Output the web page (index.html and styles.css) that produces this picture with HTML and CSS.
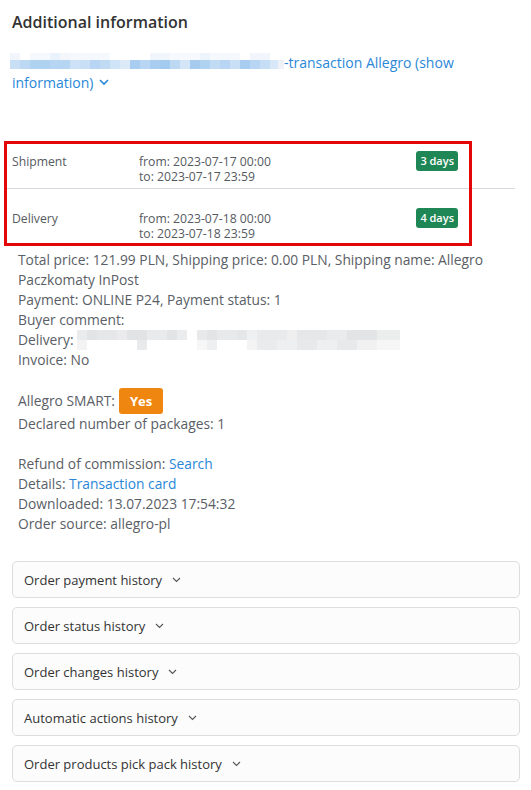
FILE: index.html
```html
<!DOCTYPE html>
<html lang="en">

<head>
    <meta charset="UTF-8">
    <meta name="viewport" content="width=device-width, initial-scale=1.0">
    <title>Additional information</title>
    <link rel="stylesheet" href="styles.css">
</head>

<body>

    <div class="panel">
        <h2 class="panel-title">Additional information</h2>

        <p class="transaction">
            <span class="blur-link"></span><a href="#" class="link">-transaction Allegro (show information)
                <svg class="link-chevron" width="10" height="7" viewBox="0 0 10 7"><polyline points="1,1 5,5 9,1" fill="none" stroke="currentColor" stroke-width="1.6"/></svg></a>
        </p>

        <div class="schedule">
            <div class="schedule-row">
                <div class="schedule-label">Shipment</div>
                <div class="schedule-dates">
                    <div class="date-line">from: 2023-07-17 00:00</div>
                    <div class="date-line">to: 2023-07-17 23:59</div>
                </div>
                <span class="badge-days">3 days</span>
            </div>
            <div class="schedule-row">
                <div class="schedule-label">Delivery</div>
                <div class="schedule-dates">
                    <div class="date-line">from: 2023-07-18 00:00</div>
                    <div class="date-line">to: 2023-07-18 23:59</div>
                </div>
                <span class="badge-days">4 days</span>
            </div>
            <div class="highlight"></div>
        </div>

        <div class="info">
            <div>Total price: 121.99 PLN, Shipping price: 0.00 PLN, Shipping name: Allegro Paczkomaty InPost</div>
            <div>Payment: ONLINE P24, Payment status: 1</div>
            <div>Buyer comment:</div>
            <div>Delivery: <span class="blur-address"></span></div>
            <div>Invoice: No</div>

            <div class="smart-row">Allegro SMART: <span class="badge-yes">Yes</span></div>
            <div>Declared number of packages: 1</div>

            <div class="gap-top">Refund of commission: <a href="#" class="link">Search</a></div>
            <div>Details: <a href="#" class="link">Transaction card</a></div>
            <div>Downloaded: 13.07.2023 17:54:32</div>
            <div>Order source: allegro-pl</div>
        </div>

        <div class="history">
            <div class="history-item">Order payment history
                <svg class="chevron" width="9" height="6" viewBox="0 0 9 6"><polyline points="1,1 4.5,4.5 8,1" fill="none" stroke="currentColor" stroke-width="1.1"/></svg>
            </div>
            <div class="history-item">Order status history
                <svg class="chevron" width="9" height="6" viewBox="0 0 9 6"><polyline points="1,1 4.5,4.5 8,1" fill="none" stroke="currentColor" stroke-width="1.1"/></svg>
            </div>
            <div class="history-item">Order changes history
                <svg class="chevron" width="9" height="6" viewBox="0 0 9 6"><polyline points="1,1 4.5,4.5 8,1" fill="none" stroke="currentColor" stroke-width="1.1"/></svg>
            </div>
            <div class="history-item">Automatic actions history
                <svg class="chevron" width="9" height="6" viewBox="0 0 9 6"><polyline points="1,1 4.5,4.5 8,1" fill="none" stroke="currentColor" stroke-width="1.1"/></svg>
            </div>
            <div class="history-item">Order products pick pack history
                <svg class="chevron" width="9" height="6" viewBox="0 0 9 6"><polyline points="1,1 4.5,4.5 8,1" fill="none" stroke="currentColor" stroke-width="1.1"/></svg>
            </div>
        </div>
    </div>

</body>

</html>
```

FILE: styles.css
```css
body {
    margin: 0;
    padding: 0;
    background-color: #fff;
    font-family: "Open Sans", "Liberation Sans", sans-serif;
    color: #5a5e66;
}

.panel {
    padding-top: 10px;
}

.panel-title {
    margin: 0 0 19px 12px;
    font-size: 16px;
    line-height: 24px;
    font-weight: 600;
    color: #333;
}

.transaction {
    margin: 0 30px 39px 12px;
    font-size: 14px;
    line-height: 20px;
}

.link {
    color: #2a87d8;
    text-decoration: none;
}

.link-chevron {
    margin-left: 2px;
    vertical-align: 2px;
}

.blur-link {
    display: inline-block;
    vertical-align: top;
    width: 274px;
    height: 16px;
    margin-left: -2px;
    background:
        linear-gradient(to right,
            #f2f6fc 0 10px, #fff 10px 20px, #f5f9fd 20px 40px, #eaf2fb 40px 50px, #f3f7fc 50px 60px,
            #f5f9fd 60px 100px, #fff 100px 140px, #f1f6fc 140px 160px, #f6f9fd 160px 190px,
            #eef4fb 190px 200px, #f5f9fd 200px 230px, #fff 230px 240px, #f2f6fc 240px 260px, #fff 260px 274px) top / 100% 7px no-repeat,
        linear-gradient(to right,
            #c9dff5 0 10px, #bcd8f3 10px 20px, #b0d2f1 20px 40px, #b5d5f2 40px 60px, #cde2f6 60px 70px,
            #c8dff5 70px 80px, #b8d6f3 80px 90px, #c0daf4 90px 100px, #d0e4f7 100px 110px, #dceaf8 110px 120px,
            #a9cdf0 120px 130px, #b8d6f3 130px 140px, #a9cdf0 140px 150px, #a3caef 150px 160px, #bcd8f3 160px 170px,
            #d3e5f7 170px 180px, #a6cbef 180px 190px, #b0d2f1 190px 200px, #c2dbf4 200px 210px, #b8d6f3 210px 220px,
            #c9dff5 220px 230px, #a9cdf0 230px 240px, #b8d6f3 240px 250px, #c5ddf5 250px 260px, #d8e8f8 260px 268px,
            #eef2f7 268px 274px) bottom / 100% 9px no-repeat;
}

.schedule {
    position: relative;
    margin: 0 16px 0 4px;
    font-size: 12.2px;
    color: #565a61;
}

.schedule-row {
    display: grid;
    grid-template-columns: 127px 1fr auto;
    padding: 22px 57px 4px 8px;
}

.schedule-row + .schedule-row {
    border-top: 1px solid #d5d9de;
}

.schedule-label,
.date-line {
    height: 15px;
    line-height: 15px;
}

.badge-days {
    align-self: start;
    margin-top: -3px;
    padding: 0 4px;
    font-size: 11px;
    line-height: 20px;
    font-weight: 600;
    color: #fff;
    background-color: #1f8755;
    border-radius: 3px;
}

.highlight {
    position: absolute;
    top: 9px;
    bottom: -1px;
    left: 0;
    width: 468px;
    border: 3px solid #e30707;
    box-sizing: border-box;
}

.info {
    padding: 5px 20px 0 18px;
    font-size: 13.8px;
    line-height: 20px;
}

.blur-address {
    display: inline-block;
    vertical-align: top;
    width: 323px;
    height: 20px;
    background:
        linear-gradient(to right,
            #eaebed 0 10px, #e3e4e6 10px 20px, #e6e7e9 20px 40px, #ebebed 40px 50px, #e2e3e5 50px 70px,
            #e9eaec 70px 90px, #e3e4e6 90px 100px, #ebeced 100px 110px, #fff 110px 120px, #e8e9eb 120px 130px,
            #e3e4e6 130px 140px, #e8e9eb 140px 160px, #e5e6e8 160px 170px, #eff0f1 170px 180px,
            #e9eaec 180px 210px, #efefef 210px 220px, #e6e7e9 220px 250px, #eaebed 250px 270px, #e3e4e6 270px 300px,
            #eceded 300px 323px) top / 100% 10px no-repeat,
        linear-gradient(to right,
            #f3f3f4 0 10px, #fff 10px 60px, #e9eaec 60px 70px, #fff 70px 120px, #f7f7f7 120px 130px, #eeeff0 130px 140px,
            #fff 140px 170px, #f4f4f5 170px 180px, #eaebed 180px 200px, #eeeff0 200px 220px, #e8e9eb 220px 240px,
            #eeeff0 240px 260px, #e8e9eb 260px 280px, #f1f1f2 280px 300px, #f6f6f6 300px 323px) bottom / 100% 10px no-repeat;
}

.smart-row {
    display: flex;
    align-items: center;
    height: 26px;
    margin-top: 18px;
}

.badge-yes {
    margin-left: 4px;
    padding: 0 11px;
    font-size: 13px;
    line-height: 26px;
    font-weight: 700;
    color: #fff;
    background-color: #ef8610;
    border-radius: 3px;
}

.gap-top {
    margin-top: 20px;
}

.history {
    margin: 27px 11px 0 12px;
}

.history-item {
    display: flex;
    align-items: center;
    height: 35px;
    padding: 0 11px;
    margin-bottom: 9px;
    font-size: 13px;
    color: #333;
    background-color: #fcfcfc;
    border: 1px solid #dcdde0;
    border-radius: 5px;
}

.chevron {
    margin-left: 10px;
    color: #555;
}
```
